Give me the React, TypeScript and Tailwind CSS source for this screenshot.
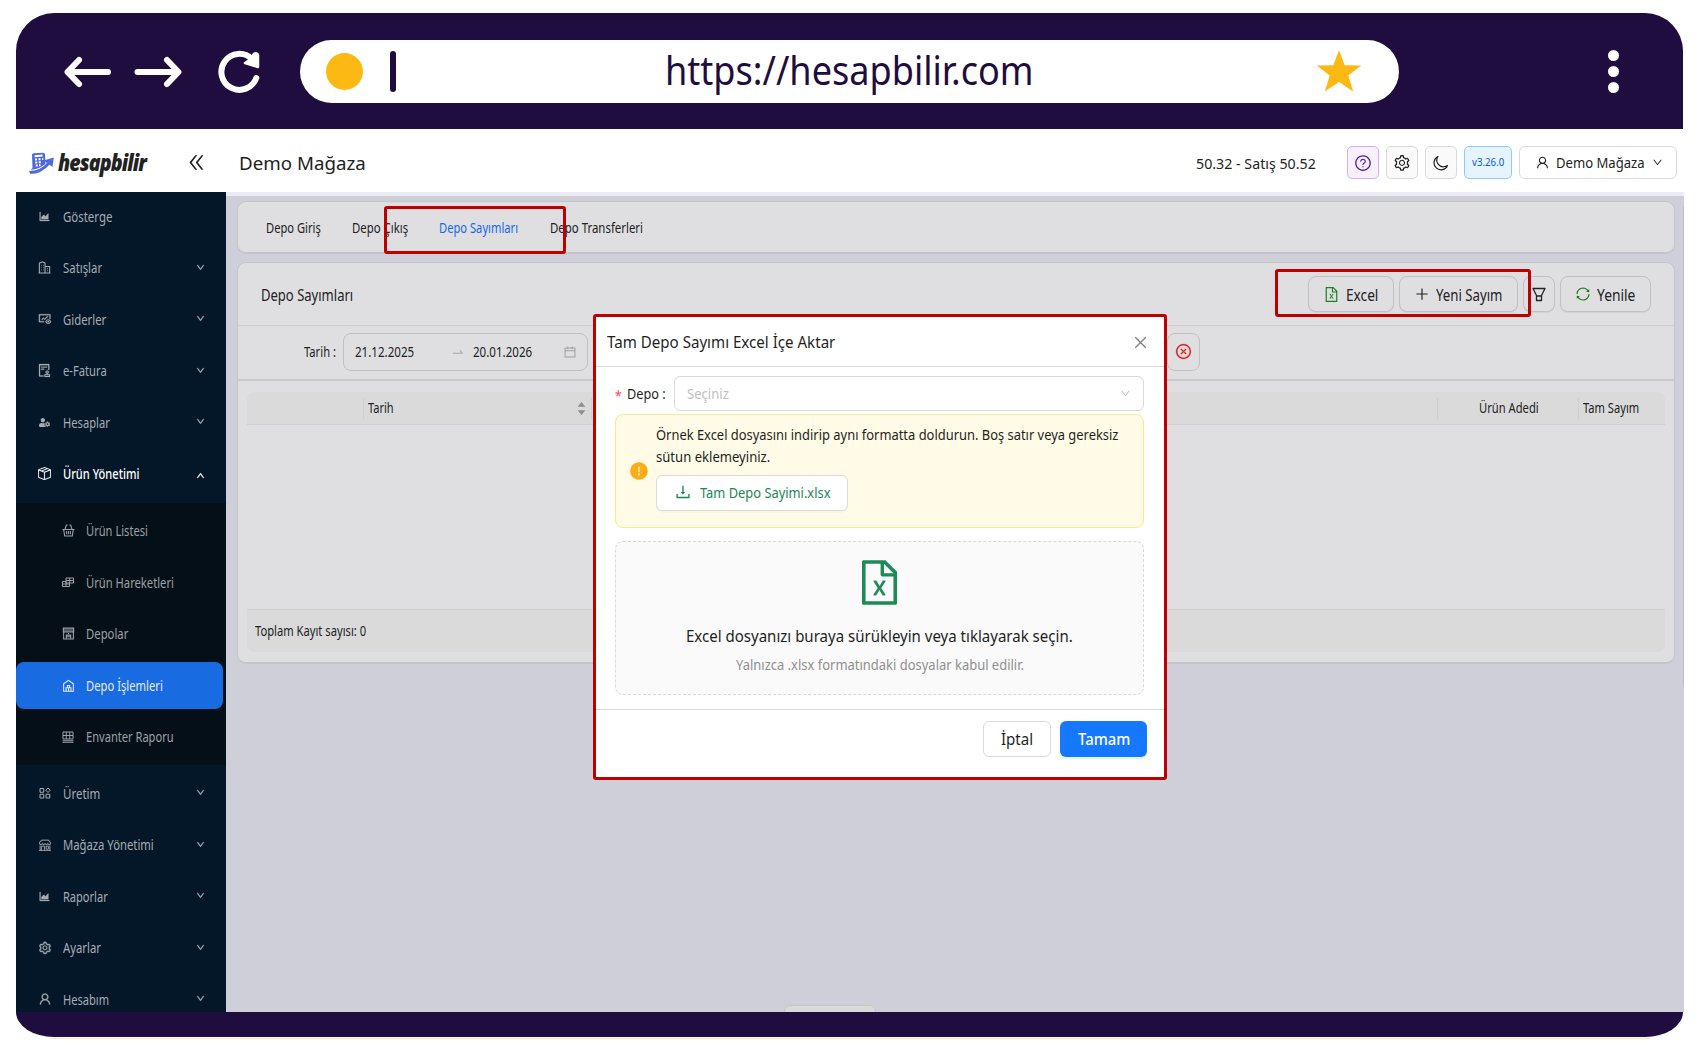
import { useLayoutEffect, useRef, useState, type ReactNode } from 'react';
import {
  AiFillCaretDown,
  AiFillCaretUp,
  AiFillExclamationCircle,
  AiOutlineAreaChart,
  AiOutlineAudit,
  AiOutlineCalendar,
  AiOutlineClose,
  AiOutlineCloseCircle,
  AiOutlineDoubleLeft,
  AiOutlineDown,
  AiOutlineDownload,
  AiOutlineFileExcel,
  AiOutlineFundView,
  AiOutlinePlus,
  AiOutlineQuestionCircle,
  AiOutlineSetting,
  AiOutlineSwapRight,
  AiOutlineSync,
  AiOutlineUp,
  AiOutlineUser,
} from 'react-icons/ai';
import { BsBoxSeam, BsShop } from 'react-icons/bs';
import { FaUserCog } from 'react-icons/fa';

// Text squeezed or stretched to a fixed width
function Fit({ w, className = '', children }: { w: number; className?: string; children: ReactNode }) {
  const ref = useRef<HTMLSpanElement>(null);
  const [scale, setScale] = useState(1);

  useLayoutEffect(() => {
    if (ref.current) setScale(w / ref.current.offsetWidth);
  }, [w]);

  return (
    <span className={`inline-block shrink-0 whitespace-nowrap text-left ${className}`} style={{ width: w }}>
      <span ref={ref} className="inline-block origin-left" style={{ transform: `scaleX(${scale})` }}>
        {children}
      </span>
    </span>
  );
}

function Line({ children, size = 12 }: { children: ReactNode; size?: number }) {
  return (
    <svg width={size} height={size} viewBox="0 0 24 24" fill="none" stroke="currentColor" strokeWidth="2">
      {children}
    </svg>
  );
}

const BuildingIcon = () => (
  <Line size={13}>
    <path d="M2.500 22V4L8 1.500 13 4v18M13 10h8.500v12M1 22h22M6 8h1M9.500 8h1M6 12h1M9.500 12h1M6 16h1M9.500 16h1M16.500 14h1.500M16.500 18h1.500" />
  </Line>
);

const BasketIcon = () => (
  <Line size={13}>
    <path d="M1 10h22M3 10l2 12h14l2-12M5.500 10L8 2h2M18.500 10L16 2h-2M8.500 13v6M12 13v6M15.500 13v6" />
  </Line>
);

const MovesIcon = () => (
  <Line>
    <path d="M8 4h15v10H8zM15.500 4v10M8 9h15M1 11h7M1 11v10h14v-7M1 16h14M8 11v10" />
  </Line>
);

const DepotIcon = () => (
  <Line size={13}>
    <path d="M2.500 2h19v7h-19zM3 5.500h18M3 9v13h18V9M8 22v-7h8v7M8 18h8M11 12h2" />
  </Line>
);

const WarehouseIcon = () => (
  <Line size={13}>
    <path d="M3 22.500V9l9-6.500L21 9v13.500zM7.500 22v-6h9v6M10 16v-4h4v4M12 16v6" />
  </Line>
);

const InventoryIcon = () => (
  <Line>
    <path d="M2 2h20v14H2zM8.500 2v14M15.500 2v14M2 9h20M1 19.500h22M1 22.500h22" />
  </Line>
);

const AppsIcon = () => (
  <Line>
    <path d="M2 3h7.500v7.500H2zM2 14.500h7.500V22H2zM14 14.500h7.500V22H14zM18 2l4.500 4.500L18 11l-4.500-4.500z" />
  </Line>
);

const MoonIcon = () => (
  <svg className="mt-px" width="16" height="16" viewBox="0 0 16 16" fill="none" stroke="currentColor" strokeWidth="1.200">
    <path d="M5 1.500A7 7 0 1 0 14.500 10.500A5 5 0 0 1 12 11.500A6.500 6.500 0 0 1 5 1.500z" strokeLinejoin="round" />
  </svg>
);

const FunnelIcon = () => (
  <svg width="14" height="15" viewBox="0 0 14 15" fill="none" stroke="currentColor" strokeWidth="1.300">
    <path d="M1 1.500h12L9.500 8.500v5h-5v-5zM4.500 9h5" strokeLinejoin="round" />
  </svg>
);

type Item = { label: string; w: number; icon: ReactNode; arrow?: 'up' | 'down'; active?: boolean };

const topItems: Item[] = [
  { label: 'Gösterge', w: 49, icon: <AiOutlineAreaChart size={13} strokeWidth={20} /> },
  { label: 'Satışlar', w: 39, icon: <BuildingIcon />, arrow: 'down' },
  { label: 'Giderler', w: 43, icon: <AiOutlineFundView size={14} strokeWidth={20} />, arrow: 'down' },
  { label: 'e-Fatura', w: 44, icon: <AiOutlineAudit size={15} strokeWidth={20} />, arrow: 'down' },
  { label: 'Hesaplar', w: 47, icon: <FaUserCog size={11} />, arrow: 'down' },
  { label: 'Ürün Yönetimi', w: 76, icon: <BsBoxSeam size={13} strokeWidth={0.2} />, arrow: 'up', active: true },
];

const subItems: Item[] = [
  { label: 'Ürün Listesi', w: 62, icon: <BasketIcon /> },
  { label: 'Ürün Hareketleri', w: 88, icon: <MovesIcon /> },
  { label: 'Depolar', w: 42, icon: <DepotIcon /> },
  { label: 'Depo İşlemleri', w: 77, icon: <WarehouseIcon />, active: true },
  { label: 'Envanter Raporu', w: 88, icon: <InventoryIcon /> },
];

const bottomItems: Item[] = [
  { label: 'Üretim', w: 37, icon: <AppsIcon />, arrow: 'down' },
  { label: 'Mağaza Yönetimi', w: 91, icon: <BsShop size={12} strokeWidth={0.2} />, arrow: 'down' },
  { label: 'Raporlar', w: 45, icon: <AiOutlineAreaChart size={13} strokeWidth={20} />, arrow: 'down' },
  { label: 'Ayarlar', w: 38, icon: <AiOutlineSetting size={14} strokeWidth={20} />, arrow: 'down' },
  { label: 'Hesabım', w: 46, icon: <AiOutlineUser size={14} strokeWidth={20} />, arrow: 'down' },
];

function MenuItem({ item }: { item: Item }) {
  return (
    <div className={`flex h-[51.5px] items-center pl-[21px] pr-[21px] ${item.active ? 'text-white' : 'text-[#a6acb4]'}`}>
      <span className="flex w-[15px] justify-center">{item.icon}</span>
      <Fit w={item.w} className={`ml-[10.5px] text-[14px] ${item.active ? 'font-medium' : ''}`}>{item.label}</Fit>
      {item.arrow && (
        <span className="mb-px ml-auto">
          {item.arrow === 'up' ? <AiOutlineUp size={9} strokeWidth={60} className="mt-1" /> : <AiOutlineDown size={9} strokeWidth={60} />}
        </span>
      )}
    </div>
  );
}

function SubItem({ item }: { item: Item }) {
  return (
    <div className="flex h-[51.5px] items-center pr-[3px]">
      <div
        className={`flex h-[47px] w-full items-center rounded-lg pl-[45px] ${
          item.active ? 'bg-[#186be0] text-[#e4ecf8]' : 'text-[#9da1a5]'
        }`}
      >
        <span className="flex w-[14px] justify-center">{item.icon}</span>
        <Fit w={item.w} className="ml-[10.5px] text-[14px]">{item.label}</Fit>
      </div>
    </div>
  );
}

function BrowserBar() {
  return (
    <div className="flex h-[116px] items-center rounded-t-[38px] bg-[#1f0d3f] pl-[47px] pr-[64px]">
      <svg className="mt-px" width="50" height="34" viewBox="0 0 50 34" fill="none" stroke="#fff" strokeWidth="6" strokeLinecap="round" strokeLinejoin="round">
        <path d="M45 17H5M16 5L4.500 17 16 29" />
      </svg>
      <svg className="ml-[21px] mt-px" width="50" height="34" viewBox="0 0 50 34" fill="none" stroke="#fff" strokeWidth="6" strokeLinecap="round" strokeLinejoin="round">
        <path d="M3.500 17H44M33 5l11.500 12L33 29" />
      </svg>
      <svg className="ml-[32px] mt-px" width="46" height="46" viewBox="0 0 46 46" fill="none">
        <path d="M40.300 29A18 18 0 1 1 36 10" stroke="#fff" strokeWidth="6" strokeLinecap="round" />
        <path d="M29 14L42 18V6a2.500 2.500 0 0 0-4.500-.5l-2 4z" fill="#fff" stroke="#fff" strokeWidth="2.500" strokeLinejoin="round" />
      </svg>
      <div className="ml-[38px] flex h-[63px] w-[1099px] items-center rounded-full bg-white pl-[26px] pr-[37px]">
        <span className="size-[37px] rounded-full bg-[#fdb913]" />
        <span className="ml-[27px] h-[41px] w-[6px] rounded-full bg-[#1f0d3f]" />
        <Fit w={369} className="ml-[269px] mb-[3px] font-['Noto_Sans'] text-[40px] text-[#1f0d3f]">https://hesapbilir.com</Fit>
        <svg className="ml-auto" width="46" height="44" viewBox="0 0 46 44" fill="#fdb913">
          <path d="M23 1l5.700 15.200 16.500.2-12.900 10.200 4.900 15.900L23 33 8.800 42.500l4.900-15.900L.8 16.400l16.500-.2z" />
        </svg>
      </div>
      <div className="ml-auto flex flex-col gap-[5px]">
        <span className="size-[11px] rounded-full bg-white" />
        <span className="size-[11px] rounded-full bg-white" />
        <span className="size-[11px] rounded-full bg-white" />
      </div>
    </div>
  );
}

function Header() {
  return (
    <div className="flex h-[63px] items-center bg-white pl-[12px] pr-[7px] pt-[5px] text-[#222]">
      <svg width="26" height="22" viewBox="0 0 26 22" fill="none">
        <path d="M4 2.500Q4 1.500 6 1.300L15 .8Q17 .8 17 2.500L17.500 13 13 19 2 21 1 19.500 4.500 16z" fill="#5068de" />
        <path d="M6.500 3.200l8-.6.200 2-8 .6z" fill="#fff" />
        <path d="M7 7.500h2M10.500 7.300h2M14 7.100h1.300M7.300 10.500h2M10.800 10.300h2M7.700 13.500h2M11 13.300h1.500" stroke="#fff" strokeWidth="1.900" />
        <path d="M2 18.500c8 0 13-3 18-8" stroke="#fff" strokeWidth="1.200" />
        <path d="M2 20.500c8 0 14-3.500 19-9.500" stroke="#5068de" strokeWidth="2.800" />
        <path d="M15.500 8.500l10.300-3-1.300 9.500z" fill="#5068de" />
      </svg>
      <Fit w={88} className="ml-[4px] font-['Open_Sans'] text-[22.500px] font-extrabold italic leading-[30px] tracking-[-1px] text-[#222]">hesapbilir</Fit>
      <AiOutlineDoubleLeft className="ml-[40px] -mt-[2px]" size={21} />
      <Fit w={126.500} className="ml-[32px] text-[18.500px]">Demo Mağaza</Fit>
      <Fit w={119.500} className="ml-auto text-[15px]">50.32 - Satış 50.52</Fit>
      <div className="-mt-px ml-[31.500px] flex items-center gap-[7px]">
        <span className="flex h-[33px] w-[32px] items-center justify-center rounded-[5px] border border-[#d3adf7] bg-[#f9f0ff] text-[#531dab]">
          <AiOutlineQuestionCircle size={18} />
        </span>
        <span className="flex h-[33px] w-[32px] items-center justify-center rounded-[5px] border border-[#d9d9d9] bg-[#fafafa]">
          <AiOutlineSetting size={18} />
        </span>
        <span className="flex h-[33px] w-[32px] items-center justify-center rounded-[5px] border border-[#d9d9d9] bg-[#fafafa]">
          <MoonIcon />
        </span>
        <span className="flex h-[33px] w-[48px] items-center justify-center rounded-[5px] border border-[#91caff] bg-[#e6f4ff] text-[#0958d9]">
          <Fit w={32} className="text-[10px]">v3.26.0</Fit>
        </span>
        <span className="flex h-[33px] w-[158.500px] items-center rounded-md border border-[#d9d9d9] bg-white pl-[15px]">
          <AiOutlineUser size={15} />
          <Fit w={89} className="ml-[6px] text-[15px]">Demo Mağaza</Fit>
          <AiOutlineDown className="ml-[7px]" size={11} />
        </span>
      </div>
    </div>
  );
}

function Sidebar() {
  return (
    <div className="h-[820px] w-[210px] shrink-0 overflow-hidden bg-[#041729]">
      <div className="-mt-[1.5px]">
        {topItems.map((item) => <MenuItem key={item.label} item={item} />)}
      </div>
      <div className="mb-[2px] mt-[3.5px] bg-[#050f18] py-[2px]">
        {subItems.map((item) => <SubItem key={item.label} item={item} />)}
      </div>
      <div className="pt-px">
        {bottomItems.map((item) => <MenuItem key={item.label} item={item} />)}
      </div>
    </div>
  );
}

const btn = 'flex h-9 items-center rounded-lg border border-[#c1c1c3] bg-[#dfdfe1] shadow-[0_1px_1px_rgba(0,0,0,0.06)]';

function Content() {
  return (
    <div className="relative h-[820px] flex-1 overflow-hidden border-t-4 border-[#ebebf6] bg-[#cfcfd9] pl-[10.500px] pr-[9px] pt-[5px] text-[#222224]">
      {/* Tabs */}
      <div className="flex h-[53px] items-center rounded-[9px] border border-b-2 border-[#c4c4c8] bg-[#dfdfe1] pl-[28.500px] text-[14px]">
        <Fit w={55}>Depo Giriş</Fit>
        <Fit w={56} className="ml-[31px]">Depo Çıkış</Fit>
        <Fit w={79} className="ml-[31px] text-[#1668e8]">Depo Sayımları</Fit>
        <Fit w={93} className="ml-[31.500px]">Depo Transferleri</Fit>
      </div>

      <div className="mt-[8px] h-[402px] rounded-[9px] border border-b-2 border-[#c4c4c8] bg-[#dfdfe1]">
        <div className="flex h-[63px] items-center border-b border-[#cdcdd0] pl-[23px] pr-[23px] text-[16px]">
          <Fit w={92} className="mt-0.5">Depo Sayımları</Fit>
          <div className="ml-auto flex gap-[5px]">
            <span className={`${btn} w-[86px] pl-[14px]`}>
              <AiOutlineFileExcel size={17} className="text-[#1c7f20]" />
              <Fit w={32.500} className="ml-[6px] mt-px">Excel</Fit>
            </span>
            <span className={`${btn} w-[119px] pl-[14px]`}>
              <AiOutlinePlus size={16} />
              <Fit w={66} className="ml-[6px] mt-px">Yeni Sayım</Fit>
            </span>
            <span className={`${btn} w-[32px] justify-center`}>
              <FunnelIcon />
            </span>
            <span className={`${btn} w-[91px] pl-[14px]`}>
              <AiOutlineSync size={16} className="text-[#1c7f20]" />
              <Fit w={38} className="ml-[6px] mt-px">Yenile</Fit>
            </span>
          </div>
        </div>

        {/* Date filter */}
        <div className="flex h-[55px] items-center border-b-2 border-[#c9c9cb] pb-[2px] pl-[66.500px] text-[14px]">
          <Fit w={32}>Tarih :</Fit>
          <span className="ml-[7px] flex h-[38px] w-[244.500px] items-center rounded-lg border border-[#c1c1c3] pl-[10.500px]">
            <Fit w={59.500}>21.12.2025</Fit>
            <AiOutlineSwapRight size={14} className="ml-[36.500px] text-[#a5a5a7]" />
            <Fit w={59.500} className="ml-[8px]">20.01.2026</Fit>
            <AiOutlineCalendar size={14} className="ml-[31px] text-[#a0a0a2]" />
          </span>
          <span className="ml-[579.500px] flex h-[38px] w-[33px] items-center justify-center rounded-lg border border-[#c1c1c3] text-[#dc1c1c]">
            <AiOutlineCloseCircle size={17} strokeWidth={15} />
          </span>
        </div>

        {/* Table */}
        <div className="mx-[9px] mt-[11px]">
          <div className="flex h-[33px] items-center rounded-t-lg border-b border-[#d0d0d2] bg-[#dadadb] text-[14px]">
            <span className="ml-[116px] h-[21px] w-px bg-[#cfcfd1]" />
            <Fit w={26} className="-mt-px ml-[4px]">Tarih</Fit>
            <span className="ml-auto mr-[3.500px] flex flex-col text-[#8f8f91]">
              <AiFillCaretUp size={11} className="-mb-[3px]" />
              <AiFillCaretDown size={11} />
            </span>
            <span className="mr-[846px] h-[21px] w-px bg-[#cfcfd1]" />
            <span className="-ml-px h-[21px] w-px bg-[#cfcfd1]" />
            <Fit w={60} className="-mt-px ml-[41px]">Ürün Adedi</Fit>
            <span className="ml-[39.500px] h-[21px] w-px bg-[#cfcfd1]" />
            <Fit w={56.500} className="-mt-px ml-[4px] mr-[25.500px]">Tam Sayım</Fit>
          </div>
          <div className="h-[184px]" />
          <div className="flex h-[43px] items-center rounded-b-lg border-t border-[#d0d0d2] bg-[#dadadb] pb-px pl-[8px] text-[14px]">
            <Fit w={111}>Toplam Kayıt sayısı: 0</Fit>
          </div>
        </div>
      </div>

      {/* Scrollbar edge and the widget peeking from below */}
      <span className="absolute right-0 top-[10px] h-[480px] w-px bg-[#bdbdc6]" />
      <span className="absolute -bottom-2 left-[558px] h-[15px] w-[92px] rounded-md border border-[#c6c6ca] bg-[#d9d9da]" />
    </div>
  );
}

function ImportModal() {
  return (
    <div className="absolute left-[593px] top-[314px] flex h-[466px] w-[574px] flex-col rounded-[3px] border-[3px] border-[#bf0000] bg-white text-[#1f1f1f]">
      <div className="flex h-[50px] items-center border-b border-[#d9d9d9] pl-[10.500px] pr-[15px] text-[16px]">
        <Fit w={228.500}>Tam Depo Sayımı Excel İçe Aktar</Fit>
        <AiOutlineClose className="ml-auto mt-[2px] text-[#808080]" size={17} />
      </div>
      <div className="pl-[19px] pr-[20px] pt-[9px] text-[14px]">
        <div className="flex items-center">
          <Fit w={7} className="mt-1 text-[#ff4d4f]">*</Fit>
          <Fit w={39} className="-mt-px ml-[5px]">Depo :</Fit>
          <span className="ml-[8px] flex h-[35px] flex-1 items-center rounded-md border border-[#d9d9d9] px-[12px] text-[#bfbfbf]">
            <Fit w={42} className="-mt-px">Seçiniz</Fit>
            <AiOutlineDown className="ml-auto" size={11} />
          </span>
        </div>

        <div className="mt-[3px] flex h-[114px] items-center rounded-lg border border-[#ffe58f] bg-[#fffbe6] pl-[13px]">
          <AiFillExclamationCircle size={20} className="text-[#faad14]" />
          <div className="-mt-[7px] ml-[7px] flex flex-col leading-[22px]">
            <Fit w={462}>Örnek Excel dosyasını indirip aynı formatta doldurun. Boş satır veya gereksiz</Fit>
            <Fit w={114}>sütun eklemeyiniz.</Fit>
            <span className="mt-[7px] flex h-9 w-[192px] items-center rounded-md border border-[#d9d9d9] bg-white pl-[17px] text-[#1b8654] shadow-[0_2px_0_rgba(0,0,0,0.02)]">
              <AiOutlineDownload size={18} className="-mt-[2px]" />
              <Fit w={130.500} className="ml-[7.500px]">Tam Depo Sayimi.xlsx</Fit>
            </span>
          </div>
        </div>

        <div className="mt-[13px] flex h-[154px] flex-col items-center rounded-lg border border-dashed border-[#d9d9d9] bg-[#fafafa] pt-[15px]">
          <AiOutlineFileExcel size={51} className="text-[#1e8a57]" />
          <Fit w={387} className="mt-[16px] text-[16px]">Excel dosyanızı buraya sürükleyin veya tıklayarak seçin.</Fit>
          <Fit w={288} className="mt-[6px] text-[#8f8f8f]">Yalnızca .xlsx formatındaki dosyalar kabul edilir.</Fit>
        </div>
      </div>
      <div className="mt-[14px] flex justify-end gap-[9px] border-t border-[#d9d9d9] pr-[17px] pt-[11px] text-[16px]">
        <span className="flex h-9 w-[68px] items-center justify-center rounded-md border border-[#d9d9d9]">
          <Fit w={32}>İptal</Fit>
        </span>
        <span className="flex h-9 w-[87px] items-center justify-center rounded-md bg-[#1677ff] text-white shadow-[0_2px_0_rgba(5,145,255,0.1)]">
          <Fit w={52} className="font-medium">Tamam</Fit>
        </span>
      </div>
    </div>
  );
}

export default function App() {
  return (
    <div className="relative h-[1050px] w-[1700px] overflow-hidden bg-white pl-[16px] pr-[16px] pt-[13px] font-['Noto_Sans',sans-serif]">
      <div className="w-[1667px]">
        <BrowserBar />
      </div>
      <Header />
      <div className="flex">
        <Sidebar />
        <Content />
      </div>
      <div className="h-[25px] w-[1667px] bg-[#1f0d3f] [border-radius:0_0_38px_38px/0_0_25px_25px]" />
      <div className="ml-[34px] mt-px h-px w-[1600px] bg-[#ffe2c0]" />

      {/* Highlight frames */}
      <div className="absolute left-[384px] top-[206px] h-[48px] w-[182px] rounded-[3px] border-[3px] border-[#bf0000]" />
      <div className="absolute left-[1275px] top-[269px] h-[48px] w-[256px] rounded-[3px] border-[3px] border-[#bf0000]" />

      <ImportModal />
    </div>
  );
}
